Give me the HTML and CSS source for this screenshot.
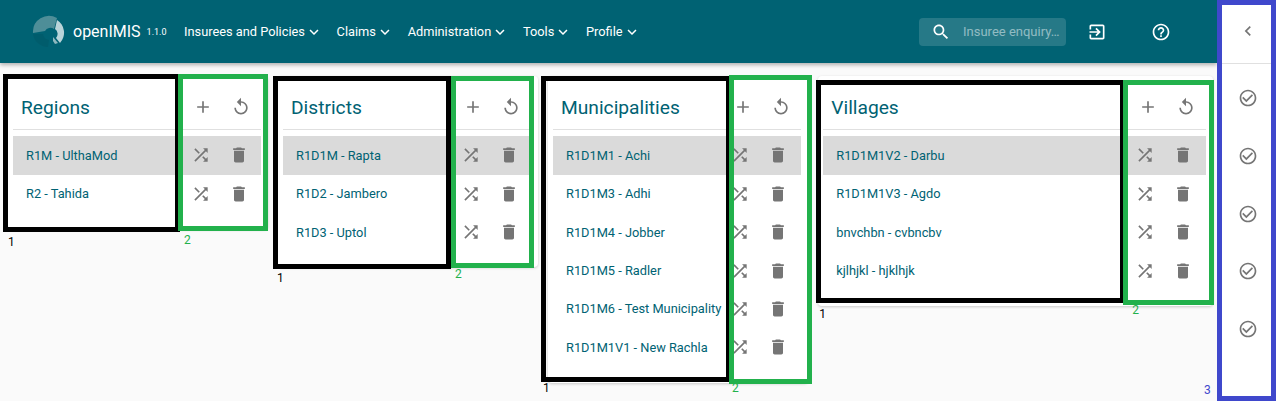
FILE: index.html
```html
<!DOCTYPE html>
<html lang="en">
<head>
    <meta charset="UTF-8">
    <meta name="viewport" content="width=device-width, initial-scale=1.0">
    <title>openIMIS - Locations</title>
    <link rel="stylesheet" href="styles.css">
</head>
<body>
    <svg class="sprite" xmlns="http://www.w3.org/2000/svg">
        <symbol id="i-add" viewBox="0 0 24 24"><path d="M19 13h-6v6h-2v-6H5v-2h6V5h2v6h6v2z"/></symbol>
        <symbol id="i-replay" viewBox="0 0 24 24"><path d="M12 5V1L7 6l5 5V7c3.31 0 6 2.69 6 6s-2.69 6-6 6-6-2.69-6-6H4c0 4.42 3.58 8 8 8s8-3.58 8-8-3.58-8-8-8z"/></symbol>
        <symbol id="i-shuffle" viewBox="0 0 24 24"><path d="M10.59 9.17L5.41 4 4 5.41l5.17 5.17 1.42-1.41zM14.5 4l2.04 2.04L4 18.59 5.41 20 17.96 7.46 20 9.5V4h-5.5zm.33 9.41l-1.41 1.41 3.13 3.13L14.5 20H20v-5.5l-2.04 2.04-3.13-3.13z"/></symbol>
        <symbol id="i-delete" viewBox="0 0 24 24"><path d="M6 19c0 1.1.9 2 2 2h8c1.1 0 2-.9 2-2V7H6v12zM19 4h-3.5l-1-1h-5l-1 1H5v2h14V4z"/></symbol>
        <symbol id="i-check" viewBox="0 0 24 24"><path d="M16.59 7.58L10 14.17l-3.59-3.58L5 12l5 5 8-8zM12 2C6.48 2 2 6.48 2 12s4.48 10 10 10 10-4.48 10-10S17.52 2 12 2zm0 18c-4.42 0-8-3.58-8-8s3.58-8 8-8 8 3.58 8 8-3.58 8-8 8z"/></symbol>
        <symbol id="i-expand" viewBox="0 0 24 24"><path d="M16.59 8.59L12 13.17 7.41 8.59 6 10l6 6 6-6z"/></symbol>
    </svg>

    <div class="page">
        <div class="main">
            <header class="topbar">
                <div class="brand">
                    <svg class="logo" viewBox="0 0 36 36">
                        <path d="M2 20L12 20A7 7 0 0 0 18 26L17 33A15 15 0 0 1 2 20Z" fill="#005c6c"/>
                        <path d="M2 19A16 16 0 0 1 26 4L23 15A6 6 0 0 0 14 17Z" fill="#4e8e98"/>
                        <path d="M26 6A15 15 0 0 1 29 29L25 24A6 6 0 0 0 24 15Z" fill="#b9d4d9"/>
                        <path d="M22 23L27 29L24 30L22 27Z" fill="#8fb8bf"/>
                    </svg>
                    <span class="brand-name">openIMIS</span>
                    <span class="brand-version">1.1.0</span>
                </div>
                <nav class="nav">
                    <a class="nav-item">Insurees and Policies<svg class="nav-arrow"><use href="#i-expand"/></svg></a>
                    <a class="nav-item">Claims<svg class="nav-arrow"><use href="#i-expand"/></svg></a>
                    <a class="nav-item">Administration<svg class="nav-arrow"><use href="#i-expand"/></svg></a>
                    <a class="nav-item">Tools<svg class="nav-arrow"><use href="#i-expand"/></svg></a>
                    <a class="nav-item">Profile<svg class="nav-arrow"><use href="#i-expand"/></svg></a>
                </nav>
                <div class="search">
                    <svg class="top-icon" viewBox="0 0 24 24"><path d="M15.5 14h-.79l-.28-.27C15.41 12.59 16 11.11 16 9.5 16 5.91 13.09 3 9.5 3S3 5.91 3 9.5 5.91 16 9.5 16c1.61 0 3.09-.59 4.23-1.57l.27.28v.79l5 4.99L20.49 19l-4.99-5zm-6 0C7.01 14 5 11.99 5 9.5S7.01 5 9.5 5 14 7.01 14 9.5 11.99 14 9.5 14z"/></svg>
                    <span class="search-text">Insuree enquiry…</span>
                </div>
                <svg class="top-icon exit" viewBox="0 0 24 24"><path d="M10.09 15.59L11.5 17l5-5-5-5-1.41 1.41L12.67 11H3v2h9.67l-2.58 2.59zM19 3H5c-1.11 0-2 .9-2 2v4h2V5h14v14H5v-4H3v4c0 1.1.89 2 2 2h14c1.1 0 2-.9 2-2V5c0-1.1-.9-2-2-2z"/></svg>
                <svg class="top-icon help" viewBox="0 0 24 24"><path d="M11 18h2v-2h-2v2zm1-16C6.48 2 2 6.48 2 12s4.48 10 10 10 10-4.48 10-10S17.52 2 12 2zm0 18c-4.41 0-8-3.59-8-8s3.59-8 8-8 8 3.59 8 8-3.59 8-8 8zm0-14c-2.21 0-4 1.79-4 4h2c0-1.1.9-2 2-2s2 .9 2 2c0 2-3 1.75-3 5h2c0-2.25 3-2.5 3-5 0-2.21-1.79-4-4-4z"/></svg>
            </header>

            <div class="cards" id="cards"></div>
        </div>

        <aside class="side">
            <div class="side-top">
                <svg class="icon" viewBox="0 0 24 24"><path d="M15.41 7.41L14 6l-6 6 6 6 1.41-1.41L10.83 12z"/></svg>
            </div>
            <div class="side-list">
                <svg class="icon"><use href="#i-check"/></svg>
                <svg class="icon"><use href="#i-check"/></svg>
                <svg class="icon"><use href="#i-check"/></svg>
                <svg class="icon"><use href="#i-check"/></svg>
                <svg class="icon"><use href="#i-check"/></svg>
            </div>
            <span class="side-mark">3</span>
        </aside>
    </div>

    <script>
        const levels = [
            { name: 'regions', title: 'Regions', items: ['R1M - UlthaMod', 'R2 - Tahida'] },
            { name: 'districts', title: 'Districts', items: ['R1D1M - Rapta', 'R1D2 - Jambero', 'R1D3 - Uptol'] },
            { name: 'municipalities', title: 'Municipalities', items: ['R1D1M1 - Achi', 'R1D1M3 - Adhi', 'R1D1M4 - Jobber', 'R1D1M5 - Radler', 'R1D1M6 - Test Municipality', 'R1D1M1V1 - New Rachla'] },
            { name: 'villages', title: 'Villages', items: ['R1D1M1V2 - Darbu', 'R1D1M1V3 - Agdo', 'bnvchbn - cvbncbv', 'kjlhjkl - hjklhjk'] }
        ];

        function icon(id) {
            return `<span class="slot"><svg class="icon"><use href="#i-${id}"/></svg></span>`;
        }

        document.getElementById('cards').innerHTML = levels.map(level => `
            <section class="card card-${level.name}">
                <div class="card-head">
                    <h2 class="card-title">${level.title}</h2>
                    <div class="head-actions">${icon('add')}${icon('replay')}</div>
                </div>
                <ul class="rows">
                    ${level.items.map((item, i) => `
                        <li class="row${i === 0 ? ' selected' : ''}">
                            <span class="row-text">${item}</span>
                            <div class="row-actions">${icon('shuffle')}${icon('delete')}</div>
                        </li>`).join('')}
                </ul>
                <div class="frame frame-black"><span class="mark">1</span></div>
                <div class="frame frame-green"><span class="mark">2</span></div>
            </section>`).join('');
    </script>
</body>
</html>
```

FILE: styles.css
```css
* {
    box-sizing: border-box;
}

body {
    margin: 0;
    height: 401px;
    overflow: hidden;
    background-color: #fafafa;
    font-family: Roboto, "Liberation Sans", sans-serif;
}

.sprite {
    display: none;
}

.icon {
    display: block;
    width: 20px;
    height: 20px;
    fill: #757575;
}

.page {
    display: flex;
    height: 401px;
}

.main {
    flex: 1;
    min-width: 0;
}

/* top bar */
.topbar {
    display: flex;
    align-items: center;
    height: 63px;
    padding-left: 31px;
    background-color: #006273;
    box-shadow: 0 2px 4px rgba(0, 0, 0, 0.3);
    color: #fff;
}

.brand {
    display: flex;
    align-items: center;
    width: 153px;
}

.logo {
    width: 36px;
    height: 36px;
    margin-right: 6px;
}

.brand-name {
    font-size: 16px;
    margin-right: 6px;
}

.brand-version {
    font-size: 9px;
}

.nav {
    display: flex;
    width: 735px;
}

.nav-item {
    display: flex;
    align-items: center;
    font-size: 12.8px;
    margin-right: 13.7px;
    white-space: nowrap;
}

.nav-arrow {
    width: 18px;
    height: 18px;
    fill: #fff;
}

.top-icon {
    display: block;
    width: 20px;
    height: 20px;
    fill: #fff;
}

.search {
    display: flex;
    align-items: center;
    width: 147px;
    height: 28px;
    padding-left: 12px;
    background-color: rgba(255, 255, 255, 0.15);
    border-radius: 4px;
}

.search-text {
    margin-left: 12px;
    font-size: 13px;
    color: rgba(255, 255, 255, 0.5);
    white-space: nowrap;
}

.exit {
    margin-left: 21px;
}

.help {
    margin-left: 44px;
}

/* location cards */
.cards {
    display: flex;
    align-items: flex-start;
    gap: 10px;
    padding: 13px 0 0 8px;
}

.card {
    position: relative;
    flex: 0 0 260px;
    padding: 0 7px 16px 5px;
    background-color: #fff;
    border-radius: 4px;
    box-shadow: 0 1px 3px rgba(0, 0, 0, 0.2);
}

.card-villages {
    flex-basis: 395px;
}

.card-head {
    display: flex;
    align-items: center;
    justify-content: space-between;
    height: 54px;
    padding: 8px 1px 0 8px;
    border-bottom: 1px solid #e0e0e0;
}

.card-title {
    margin: 2px 0 0;
    font-size: 19.2px;
    font-weight: 400;
    color: #006273;
}

.head-actions,
.row-actions {
    display: flex;
    flex-shrink: 0;
}

.slot {
    display: flex;
    justify-content: center;
    width: 38px;
}

.rows {
    list-style: none;
    margin: 6.2px 0 0;
    padding: 0;
}

.row {
    display: flex;
    align-items: center;
    justify-content: space-between;
    height: 38.4px;
    padding: 0 3px 0 13px;
    font-size: 12.8px;
    color: #006273;
}

.row-text {
    white-space: nowrap;
}

.row.selected {
    background-color: #dadada;
}

.card-municipalities .row {
    padding-right: 4px;
}

.card-villages .row {
    padding-right: 4.5px;
}

/* annotation frames drawn over the screenshot */
.frame {
    position: absolute;
    border: 5px solid;
}

.frame-black {
    border-color: #000;
}

.frame-green {
    border-color: #22b14c;
}

.mark {
    position: absolute;
    font-size: 12px;
    line-height: 14px;
}

.frame-black .mark {
    color: #000;
}

.frame-green .mark {
    color: #22b14c;
}

.card-regions .frame-black { left: -5px; top: -2px; width: 177px; height: 158px; }
.card-regions .frame-black .mark { left: 0; bottom: -22px; }
.card-regions .frame-green { left: 170px; top: -2px; width: 90px; height: 157px; }
.card-regions .frame-green .mark { left: 1px; bottom: -21px; }

.card-districts .frame-black { left: -5px; top: 0; width: 178px; height: 193px; }
.card-districts .frame-black .mark { left: -1px; bottom: -21px; }
.card-districts .frame-green { left: 173px; top: 0; width: 83px; height: 192px; }
.card-districts .frame-green .mark { left: -1px; bottom: -18px; }

.card-municipalities .frame-black { left: -7px; top: 0; width: 190px; height: 306px; }
.card-municipalities .frame-black .mark { left: -3px; bottom: -18px; }
.card-municipalities .frame-green { left: 181px; top: -1px; width: 83px; height: 309px; }
.card-municipalities .frame-green .mark { left: -2px; bottom: -16px; }

.card-villages .frame-black { left: -2px; top: 4px; width: 309px; height: 223px; }
.card-villages .frame-black .mark { left: -2px; bottom: -23px; }
.card-villages .frame-green { left: 305px; top: 4px; width: 91px; height: 225px; }
.card-villages .frame-green .mark { left: 4px; bottom: -17px; }

/* right side panel */
.side {
    position: relative;
    flex: 0 0 59px;
    border: 5px solid #3f48cc;
    background-color: #fff;
}

.side-top {
    display: flex;
    align-items: center;
    justify-content: center;
    height: 59px;
    padding: 0 0 6px 2px;
    border-bottom: 1px solid #e0e0e0;
}

.side-list {
    display: flex;
    flex-direction: column;
    align-items: center;
    gap: 37.8px;
    padding: 24px 0 0 2px;
}

.side-mark {
    position: absolute;
    left: -18px;
    bottom: -1px;
    font-size: 12px;
    line-height: 14px;
    color: #3f48cc;
}
```
